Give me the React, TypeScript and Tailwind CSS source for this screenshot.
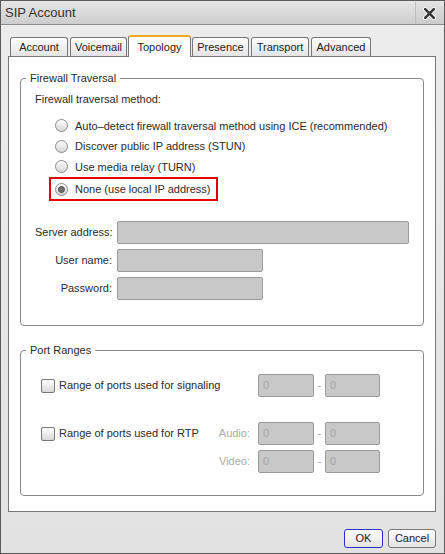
import React from 'react';

const tabs = [
  { label: 'Account', w: 'w-[58px]' },
  { label: 'Voicemail', w: 'w-[57px]' },
  { label: 'Topology', w: 'w-[63px]', active: true },
  { label: 'Presence', w: 'w-[57px]' },
  { label: 'Transport', w: 'w-[58px]' },
  { label: 'Advanced', w: 'w-[60px]' },
];

const methods = [
  'Auto–detect firewall traversal method using ICE (recommended)',
  'Discover public IP address (STUN)',
  'Use media relay (TURN)',
];

function Radio({ checked }: { checked?: boolean }) {
  return (
    <span className="w-[13px] h-[13px] shrink-0 rounded-full border border-[#8a8a8a] bg-gradient-to-b from-white to-[#d6d6d6] flex items-center justify-center">
      {checked && <span className="w-[7px] h-[7px] rounded-full border border-[#4a4a4a] bg-[#727272]" />}
    </span>
  );
}

function Checkbox() {
  return <span className="w-[14px] h-[14px] shrink-0 rounded-[2px] border border-[#777] bg-gradient-to-b from-white to-[#d8d8d8]" />;
}

function Field({ w, value }: { w: string; value?: string }) {
  return (
    <div className={`${w} h-[23px] rounded-[2px] border border-[#9a9a9a] bg-[#c8c8c8] flex items-center pl-[4px] text-[#a6a6a6]`}>
      {value}
    </div>
  );
}

function PortPair() {
  return (
    <>
      <Field w="w-[56px]" value="0" />
      <span className="text-center text-[#aaa]">-</span>
      <Field w="w-[55px]" value="0" />
    </>
  );
}

export default function App() {
  return (
    <div className="w-[445px] h-[554px] border border-[#5a5a5a] flex flex-col bg-[#e9e9e9] font-['Liberation_Sans',Arial,sans-serif] text-[11px] text-[#2a2a2a] overflow-hidden whitespace-nowrap">
      {/* title bar */}
      <div className="h-[24px] shrink-0 flex items-center justify-between border-b border-[#8c8c8c] bg-gradient-to-b from-[#e6e6e6] to-[#cdcdcd]">
        <span className="pl-[4px] text-[13px] text-[#333]">SIP Account</span>
        <button className="w-[28px] h-[22px] mr-[1px] mt-[1px] flex items-center justify-center bg-gradient-to-b from-[#e2e2e2] to-[#cbcbcb] border-l border-[#bdbdbd]">
          <svg width="13" height="13" viewBox="0 0 12 12">
            <path d="M2 2L10 10M10 2L2 10" stroke="#fff" strokeWidth="4" strokeLinecap="round" />
            <path d="M2 2L10 10M10 2L2 10" stroke="#333" strokeWidth="2.4" strokeLinecap="round" />
          </svg>
        </button>
      </div>

      {/* body */}
      <div className="flex-1 min-h-0 flex flex-col pt-[10px] pl-[7px] pr-[8px] bg-gradient-to-b from-[#ececec] to-[#e2e2e2]">
        <div className="flex items-end pl-[2px] gap-[2px] h-[21px] shrink-0">
          {tabs.map(t =>
            t.active ? (
              <div
                key={t.label}
                className={`${t.w} h-[22px] -mb-px -mx-[1px] relative z-10 flex items-center justify-center rounded-t-[3px] border border-b-0 border-[#777] border-t-2 border-t-[#f2a81d] bg-white text-[#222]`}
              >
                {t.label}
              </div>
            ) : (
              <div
                key={t.label}
                className={`${t.w} h-[19px] flex items-center justify-center rounded-t-[3px] border border-b-0 border-[#777] bg-gradient-to-b from-white to-[#e3e3e3] text-[#222]`}
              >
                {t.label}
              </div>
            ),
          )}
        </div>

        <div className="shrink-0 border border-[#777] bg-white pt-[14px] pb-[15px] px-[11px] flex flex-col gap-[17px]">
          <fieldset className="border border-[#8a8a8a] rounded-[4px] px-[14px] pt-[7px] pb-[25px]">
            <legend className="-ml-[9px] px-[4px] leading-[14px]">Firewall Traversal</legend>
            <div className="leading-[14px]">Firewall traversal method:</div>
            <div className="mt-[9.5px] ml-[20px] flex flex-col">
              {methods.map(m => (
                <div key={m} className="h-[20.5px] flex items-center gap-[7px]">
                  <Radio />
                  <span>{m}</span>
                </div>
              ))}
              <div className="w-fit h-[24px] -ml-[6px] pl-[4px] pr-[5px] border-2 border-[#e50000] flex items-center gap-[7px]">
                <Radio checked />
                <span>None (use local IP address)</span>
              </div>
            </div>
            <div className="mt-[20px] grid grid-cols-[77px_1fr] gap-x-[5px] gap-y-[5px] items-center">
              <span className="text-right">Server address:</span>
              <Field w="w-full" />
              <span className="text-right">User name:</span>
              <Field w="w-[146px]" />
              <span className="text-right">Password:</span>
              <Field w="w-[146px]" />
            </div>
          </fieldset>

          <fieldset className="border border-[#8a8a8a] rounded-[4px] pl-[20px] pt-[17px] pb-[22px]">
            <legend className="-ml-[15px] px-[4px] leading-[14px]">Port Ranges</legend>
            <div className="grid grid-cols-[171px_46px_56px_11px_55px] grid-rows-[23px_15px_23px_23px] gap-y-[5px] items-center">
              <label className="flex items-center gap-[4px]">
                <Checkbox />
                <span>Range of ports used for signaling</span>
              </label>
              <span />
              <PortPair />

              <span className="col-span-5" />

              <label className="flex items-center gap-[4px]">
                <Checkbox />
                <span>Range of ports used for RTP</span>
              </label>
              <span className="text-right pr-[8px] text-[#aaa]">Audio:</span>
              <PortPair />

              <span />
              <span className="text-right pr-[8px] text-[#aaa]">Video:</span>
              <PortPair />
            </div>
          </fieldset>
        </div>

        <div className="mt-[17px] flex justify-end gap-[5px]">
          <button className="w-[39px] h-[19px] rounded-[3px] border border-[#2830c8] bg-gradient-to-b from-white to-[#e4e4e4] text-[11px] text-[#222]">
            OK
          </button>
          <button className="w-[48px] h-[19px] rounded-[3px] border border-[#777] bg-gradient-to-b from-white to-[#e4e4e4] text-[11px] text-[#222]">
            Cancel
          </button>
        </div>
      </div>
    </div>
  );
}
